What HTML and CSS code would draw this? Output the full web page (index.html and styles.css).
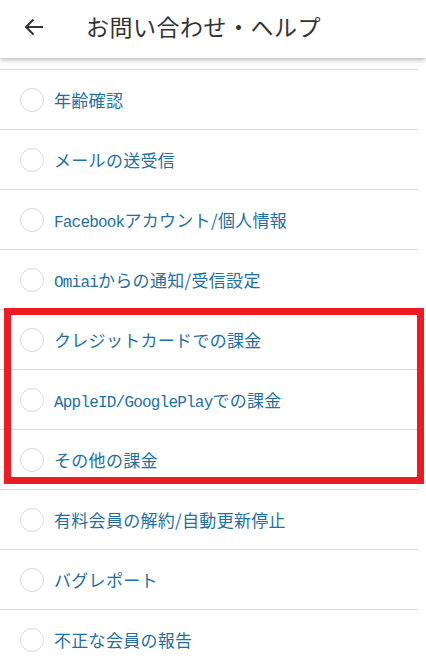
FILE: index.html
```html
<!DOCTYPE html>
<html lang="ja">
<head>
<meta charset="utf-8">
<link rel="stylesheet" href="styles.css">
</head>
<body>
<header class="bar">
  <svg class="back" width="20" height="18" viewBox="0 0 20 18"><path d="M19 9H2M9.5 1.5L2 9l7.5 7.5" fill="none" stroke="#333" stroke-width="2"/></svg>
  <h1 class="title">お問い合わせ・ヘルプ</h1>
</header>
<main class="page">
  <ul class="list">
    <li class="item"><span class="radio"></span><span class="label">年齢確認</span></li>
    <li class="item"><span class="radio"></span><span class="label">メールの送受信</span></li>
    <li class="item"><span class="radio"></span><span class="label"><span class="lat">Facebook</span>アカウント/個人情報</span></li>
    <li class="item"><span class="radio"></span><span class="label"><span class="lat">Omiai</span>からの通知/受信設定</span></li>
    <li class="item"><span class="radio"></span><span class="label">クレジットカードでの課金</span></li>
    <li class="item"><span class="radio"></span><span class="label"><span class="lat">AppleID/GooglePlay</span>での課金</span></li>
    <li class="item"><span class="radio"></span><span class="label">その他の課金</span></li>
    <li class="item"><span class="radio"></span><span class="label">有料会員の解約/自動更新停止</span></li>
    <li class="item"><span class="radio"></span><span class="label">バグレポート</span></li>
    <li class="item"><span class="radio"></span><span class="label">不正な会員の報告</span></li>
  </ul>
  <div class="highlight"></div>
</main>
</body>
</html>
```
FILE: styles.css
```css
html, body {
  margin: 0;
  padding: 0;
  background: #fff;
  font-family: "Noto Sans CJK JP", "Noto Sans", sans-serif;
  overflow: hidden;
}
.bar {
  position: relative;
  z-index: 2;
  height: 58px;
  display: flex;
  align-items: center;
  background: #fff;
  box-shadow: 0 2px 5px rgba(0, 0, 0, 0.28);
}
.back {
  margin-left: 24px;
  margin-top: -4px;
}
.title {
  margin: -6px 0 0 42px;
  font-size: 23px;
  font-weight: 400;
  color: #333;
  letter-spacing: 0.5px;
}
.page {
  position: relative;
  padding-top: 11px;
}
.list {
  list-style: none;
  margin: 0;
  padding: 0;
  width: 418px;
}
.item {
  display: flex;
  align-items: center;
  height: 59px;
  border-top: 1px solid #dcdcdc;
  padding-left: 20px;
}
.radio {
  width: 22px;
  height: 22px;
  border: 1px solid #d8d8d8;
  border-radius: 50%;
  flex: none;
}
.label {
  margin-left: 10px;
  font-size: 17px;
  color: #1d6fa5;
  letter-spacing: 0.3px;
}
.lat {
  font-family: "Liberation Mono", monospace;
  font-size: 16px;
  letter-spacing: -0.8px;
}
.highlight {
  position: absolute;
  left: 4px;
  top: 250px;
  width: 406px;
  height: 162px;
  border: 7px solid #ed1c24;
}
```
